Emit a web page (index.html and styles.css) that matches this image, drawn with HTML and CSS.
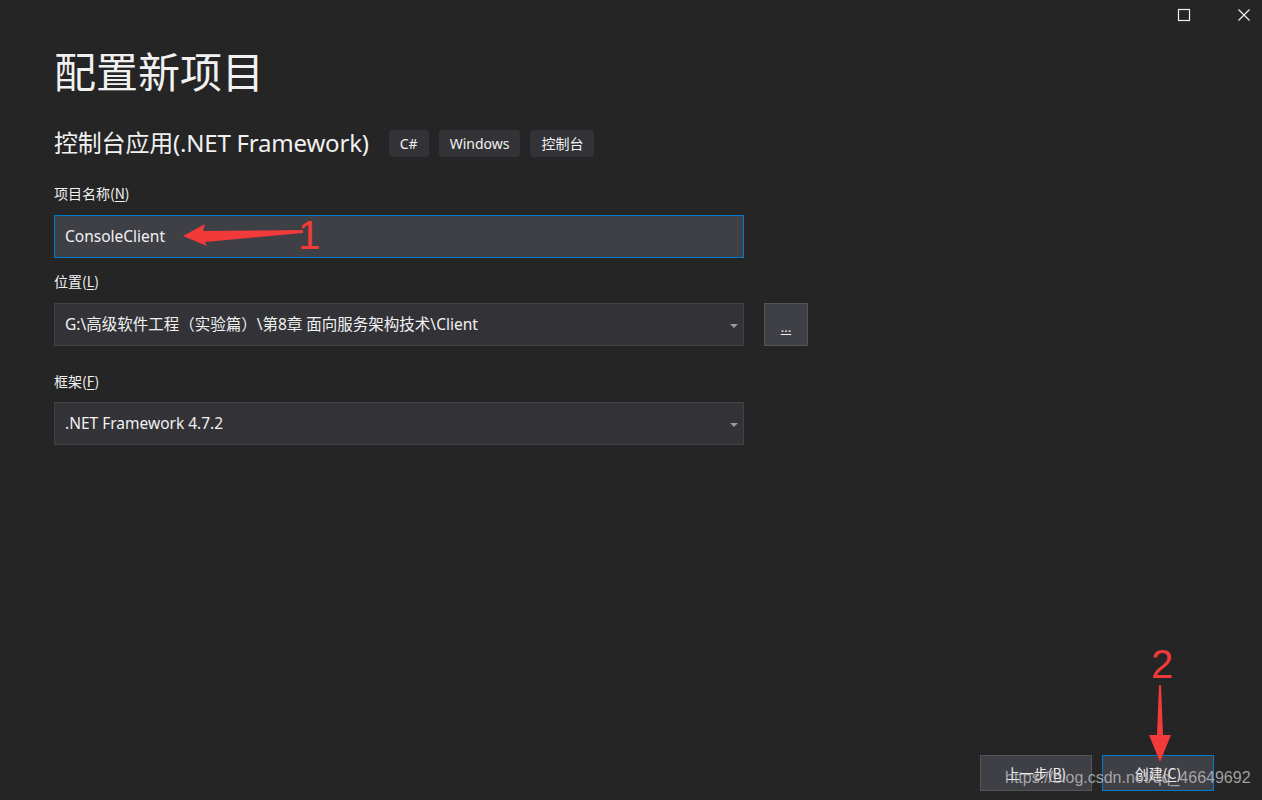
FILE: index.html
```html
<!DOCTYPE html>
<html lang="zh-CN">
<head>
<meta charset="utf-8">
<title>配置新项目</title>
<link rel="stylesheet" href="styles.css">
</head>
<body>
<div class="window">
  <div class="titlebar">
    <span class="ctl">
      <svg width="14" height="14" viewBox="0 0 14 14"><rect x="1.5" y="1.5" width="11" height="11" fill="none" stroke="#f0f0f0" stroke-width="1.2"/></svg>
    </span>
    <span class="ctl">
      <svg width="14" height="14" viewBox="0 0 14 14"><path d="M1.5 1.5 L12.5 12.5 M12.5 1.5 L1.5 12.5" stroke="#f0f0f0" stroke-width="1.2"/></svg>
    </span>
  </div>
  <main class="content">
    <h1 class="title">配置新项目</h1>
    <div class="subhead">
      <h2 class="template">控制台应用(.NET Framework)</h2>
      <span class="tag">C#</span>
      <span class="tag">Windows</span>
      <span class="tag">控制台</span>
    </div>

    <div class="field f-name">
      <label class="label">项目名称(<u>N</u>)</label>
      <div class="input focused">ConsoleClient</div>
    </div>

    <div class="field f-loc">
      <label class="label">位置(<u>L</u>)</label>
      <div class="row">
        <div class="input combo">G:\高级软件工程（实验篇）\第8章 面向服务架构技术\Client<span class="caret"></span></div>
        <div class="browse"><u>...</u></div>
      </div>
    </div>

    <div class="field f-fw">
      <label class="label">框架(<u>F</u>)</label>
      <div class="input combo">.NET Framework 4.7.2<span class="caret"></span></div>
    </div>
  </main>
  <footer class="footer">
    <button class="btn">上一步(<u>B</u>)</button>
    <button class="btn primary">创建(<u>C</u>)</button>
  </footer>

  <svg class="anno anno1" width="150" height="40" viewBox="0 0 150 40">
    <polygon points="0,18 22,6 20,13 120,12 120,15 22,24 24,28" fill="#f23a3a"/>
  </svg>
  <span class="num num1">1</span>
  <svg class="anno anno2" width="30" height="80" viewBox="0 0 30 80">
    <polygon points="14,0 16,0 18,50 26,50 15,77 4,50 12,50" fill="#f23a3a"/>
  </svg>
  <span class="num num2">2</span>
  <div class="watermark">https://blog.csdn.net/qq_46649692</div>
</div>
</body>
</html>
```

FILE: styles.css
```css
* { box-sizing: border-box; }
html, body {
  margin: 0;
  padding: 0;
  background: #252526;
}
body {
  width: 1262px;
  height: 800px;
  overflow: hidden;
  font-family: "Noto Sans", "Noto Sans CJK SC", sans-serif;
  color: #f1f1f1;
}
.window {
  position: relative;
  width: 1262px;
  height: 800px;
  display: flex;
  flex-direction: column;
}
.titlebar {
  display: flex;
  justify-content: flex-end;
  align-items: center;
  gap: 46px;
  height: 30px;
  padding-right: 11px;
}
.ctl {
  width: 14px;
  height: 14px;
  display: flex;
}
.content {
  padding-left: 54px;
  flex: 1;
}
.title {
  margin: 12px 0 0;
  font-size: 42px;
  font-weight: 400;
  line-height: 56px;
  font-family: "Noto Sans CJK SC", sans-serif;
  color: #f1f1f1;
}
.subhead {
  display: flex;
  align-items: center;
  margin-top: 31px;
  height: 28px;
}
.template {
  margin: 0 20px 0 0;
  font-size: 24px;
  font-weight: 400;
  line-height: 28px;
  letter-spacing: -0.2px;
}
.tag {
  background: #333337;
  border-radius: 4px;
  font-size: 14px;
  height: 27px;
  line-height: 27px;
  padding: 0 11px;
  margin-right: 10px;
  color: #f1f1f1;
}
.field {
  display: flex;
  flex-direction: column;
  width: 690px;
}
.label {
  font-size: 14px;
  line-height: 20px;
  font-family: "Noto Sans CJK SC", sans-serif;
}
.f-name .label { margin: 26px 0 12px; }
.f-loc .label { margin: 13px 0 12px; }
.f-fw .label { margin: 25px 0 11px; }
.input {
  height: 43px;
  background: #333337;
  border: 1px solid #434346;
  font-size: 15.5px;
  line-height: 41px;
  padding-left: 10px;
  color: #f1f1f1;
  position: relative;
  white-space: nowrap;
}
.input.focused {
  background: #3f3f46;
  border-color: #007acc;
}
.row {
  display: flex;
  gap: 20px;
  width: 754px;
}
.row .combo { width: 690px; flex: none; }
.caret {
  position: absolute;
  right: 5px;
  top: 20px;
  width: 0;
  height: 0;
  border-left: 4px solid transparent;
  border-right: 4px solid transparent;
  border-top: 4px solid #999999;
}
.browse {
  width: 44px;
  height: 43px;
  background: #3f3f46;
  border: 1px solid #555555;
  font-size: 13px;
  display: flex;
  align-items: center;
  justify-content: center;
  padding-top: 4px;
}
.footer {
  display: flex;
  justify-content: flex-end;
  gap: 10px;
  padding: 0 48px 9px 0;
}
.btn {
  width: 112px;
  height: 36px;
  background: #3f3f46;
  border: 1px solid #555555;
  color: #f1f1f1;
  font-family: "Noto Sans CJK SC", sans-serif;
  font-size: 14px;
  padding: 0;
}
.btn.primary { border-color: #007acc; }
u { text-decoration: underline; text-underline-offset: 2px; }

.anno { position: absolute; }
.anno1 { left: 183px; top: 218px; }
.anno2 { left: 1145px; top: 685px; }
.num {
  position: absolute;
  color: #f23a3a;
  font-family: "Liberation Sans", sans-serif;
  font-weight: 300;
  font-size: 40px;
  line-height: 40px;
}
.num1 { left: 298px; top: 215px; }
.num2 { left: 1151px; top: 644px; }
.watermark {
  position: absolute;
  left: 1005px;
  top: 769px;
  font-family: "Liberation Sans", Arial, sans-serif;
  font-size: 16px;
  color: rgba(200, 200, 200, 0.75);
  white-space: nowrap;
}
```
